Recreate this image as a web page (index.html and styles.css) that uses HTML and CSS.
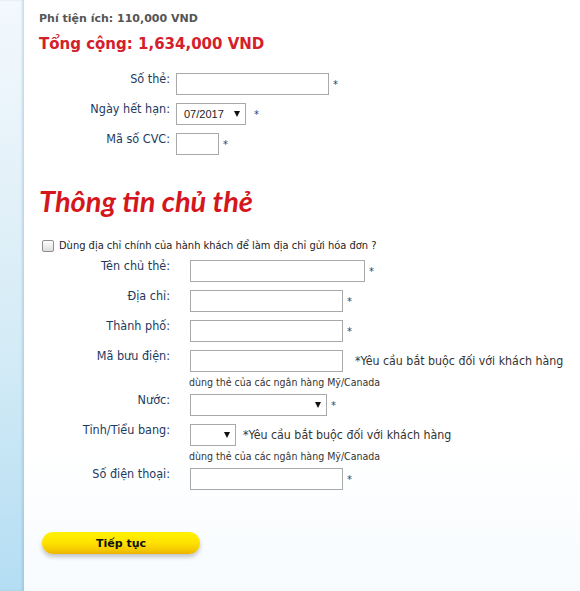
FILE: index.html
```html
<!DOCTYPE html>
<html lang="vi">
<head>
<meta charset="utf-8">
<title>Thanh toán</title>
<link rel="stylesheet" href="styles.css">
</head>
<body>
<div class="page">
  <div class="strip"></div>
  <div class="content">
    <div class="fee">Phí tiện ích: 110,000 VND</div>
    <div class="total">Tổng cộng: 1,634,000 VND</div>

    <div class="form form-card">
      <div class="row">
        <label class="lbl">Số thẻ:</label>
        <div class="field"><div class="line"><input class="inp w153" type="text"><span class="req">*</span></div></div>
      </div>
      <div class="row">
        <label class="lbl">Ngày hết hạn:</label>
        <div class="field"><div class="line"><span class="sel w70"><select><option>07/2017</option></select></span><span class="req req-wide">*</span></div></div>
      </div>
      <div class="row">
        <label class="lbl">Mã số CVC:</label>
        <div class="field"><div class="line"><input class="inp w43" type="text"><span class="req">*</span></div></div>
      </div>
    </div>

    <h2 class="heading">Thông tin chủ thẻ</h2>

    <label class="check"><input type="checkbox"><span>Dùng địa chỉ chính của hành khách để làm địa chỉ gửi hóa đơn ?</span></label>

    <div class="form form-holder">
      <div class="row">
        <label class="lbl">Tên chủ thẻ:</label>
        <div class="field"><div class="line"><input class="inp w175" type="text"><span class="req">*</span></div></div>
      </div>
      <div class="row">
        <label class="lbl">Địa chỉ:</label>
        <div class="field"><div class="line"><input class="inp w153" type="text"><span class="req">*</span></div></div>
      </div>
      <div class="row">
        <label class="lbl">Thành phố:</label>
        <div class="field"><div class="line"><input class="inp w153" type="text"><span class="req">*</span></div></div>
      </div>
      <div class="row">
        <label class="lbl">Mã bưu điện:</label>
        <div class="field"><div class="line"><input class="inp w153" type="text"><span class="note note-far">*Yêu cầu bắt buộc đối với khách hàng</span></div><div class="note2">dùng thẻ của các ngân hàng Mỹ/Canada</div></div>
      </div>
      <div class="row">
        <label class="lbl">Nước:</label>
        <div class="field"><div class="line"><span class="sel w137"><select><option></option></select></span><span class="req">*</span></div></div>
      </div>
      <div class="row">
        <label class="lbl">Tỉnh/Tiểu bang:</label>
        <div class="field"><div class="line"><span class="sel w46"><select><option></option></select></span><span class="note">*Yêu cầu bắt buộc đối với khách hàng</span></div><div class="note2">dùng thẻ của các ngân hàng Mỹ/Canada</div></div>
      </div>
      <div class="row">
        <label class="lbl">Số điện thoại:</label>
        <div class="field"><div class="line"><input class="inp w153" type="text"><span class="req">*</span></div></div>
      </div>
    </div>

    <button class="btn" type="button">Tiếp tục</button>
  </div>
</div>
</body>
</html>
```
FILE: styles.css
```css
html, body {
  margin: 0;
  padding: 0;
}
body {
  width: 580px;
  height: 591px;
  overflow: hidden;
  font-family: "DejaVu Sans Condensed", "DejaVu Sans", sans-serif;
  font-stretch: condensed;
  font-size: 11px;
  line-height: 13px;
  color: #222;
}
.page {
  display: flex;
  height: 591px;
}
.strip {
  width: 24px;
  flex: none;
  background: linear-gradient(to bottom, #f3f9fd 0%, #e4f1f9 30%, #d3ebf6 60%, #b4ddf3 100%);
  box-shadow: inset -2px 0 2px rgba(120, 160, 190, 0.3);
}
.content {
  flex: 1;
  padding: 12px 0 0 15px;
  background: linear-gradient(to bottom, #ffffff 0%, #ffffff 75%, #f7fbfe 100%);
}
.fee {
  font-family: "DejaVu Sans", sans-serif;
  font-stretch: normal;
  font-weight: bold;
  font-size: 11px;
  line-height: 13px;
  color: #555;
}
.total {
  margin-top: 10px;
  font-family: "DejaVu Sans", sans-serif;
  font-stretch: normal;
  font-weight: bold;
  font-size: 15px;
  line-height: 18px;
  color: #d4202a;
}
.form {
  display: grid;
  grid-template-columns: 131px auto;
  justify-content: start;
}
.form-card {
  margin-top: 18px;
  column-gap: 6px;
}
.form-holder {
  margin-top: 5px;
  column-gap: 20px;
}
.row {
  display: contents;
}
.lbl {
  text-align: right;
  color: #1c3a5e;
  font-size: 12.5px;
  line-height: 13px;
  padding-top: 1px;
}
.field {
  padding-top: 2px;
  padding-bottom: 6px;
}
.line {
  display: flex;
  align-items: center;
}
.inp {
  box-sizing: border-box;
  height: 22px;
  margin: 0;
  padding: 1px 3px;
  border: 1px solid #a9a9a9;
  background: #fff;
  font: inherit;
}
.w153 { width: 153px; }
.w175 { width: 175px; }
.w43 { width: 43px; }
.sel {
  position: relative;
  display: block;
  height: 22px;
}
.sel select {
  appearance: none;
  -webkit-appearance: none;
  box-sizing: border-box;
  width: 100%;
  height: 22px;
  margin: 0;
  padding: 0 0 0 7px;
  border: 1px solid #a9a9a9;
  border-radius: 0;
  background: #fff;
  font-family: "Liberation Sans", Arial, sans-serif;
  font-size: 11px;
  color: #222;
}
.sel::after {
  content: "";
  position: absolute;
  right: 6px;
  top: 8px;
  border-left: 3.5px solid transparent;
  border-right: 3.5px solid transparent;
  border-top: 6px solid #111;
  pointer-events: none;
}
.w70 { width: 70px; }
.w137 { width: 137px; }
.w46 { width: 46px; }
.req {
  margin-left: 4px;
  color: #2a3f7a;
  font-size: 11px;
}
.req-wide {
  margin-left: 8px;
}
.note {
  margin-left: 7px;
  color: #333;
  font-size: 12.3px;
  white-space: nowrap;
}
.note-far {
  margin-left: 12px;
}
.note2 {
  margin-top: 3px;
  margin-left: -1px;
  color: #333;
  font-size: 10.5px;
  line-height: 14px;
  padding-bottom: 3px;
  margin-bottom: -6px;
}
.heading {
  margin: 23px 0 0 0;
  font-family: Lato, "Open Sans", sans-serif;
  font-stretch: normal;
  font-style: italic;
  font-weight: bold;
  font-size: 29px;
  line-height: 34px;
  color: #d4161d;
}
.check {
  display: flex;
  align-items: center;
  margin-top: 21px;
  color: #222;
  line-height: 14px;
}
.check input {
  appearance: none;
  -webkit-appearance: none;
  box-sizing: border-box;
  width: 12px;
  height: 12px;
  margin: 0 5px 0 3px;
  border: 1px solid #8e8e8e;
  border-radius: 2px;
  background: linear-gradient(to bottom, #fdfdfd, #dedede);
}
.btn {
  display: block;
  margin: 36px 0 0 3px;
  width: 158px;
  height: 22px;
  padding: 0;
  border: none;
  border-radius: 11px;
  background: linear-gradient(to bottom, #fff200 0%, #ffe400 45%, #f5cb00 80%, #e9b300 100%);
  box-shadow: 0 3px 4px rgba(0, 0, 0, 0.22);
  font-family: "DejaVu Sans", sans-serif;
  font-stretch: normal;
  font-weight: bold;
  font-size: 11px;
  color: #111;
  cursor: pointer;
}
```
